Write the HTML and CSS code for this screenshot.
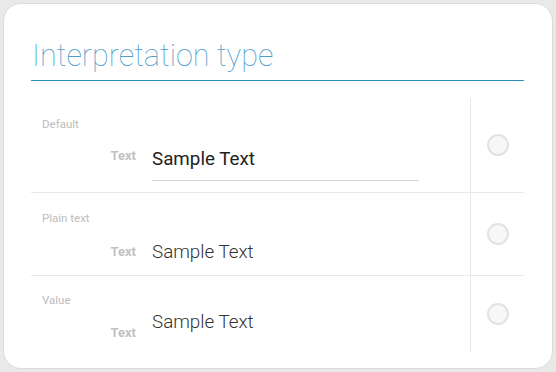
FILE: index.html
```html
<!DOCTYPE html>
<html lang="en">
<head>
    <meta charset="UTF-8">
    <meta name="viewport" content="width=device-width, initial-scale=1.0">
    <title>Interpretation type</title>
    <link rel="stylesheet" href="styles.css">
</head>
<body>
    <div class="card">
        <h1 class="title">Interpretation type</h1>
        <div class="options">
            <div class="option">
                <div class="option-body">
                    <div class="caption">Default</div>
                    <div class="field">
                        <span class="field-label">Text</span>
                        <div class="field-input">Sample Text</div>
                    </div>
                </div>
                <div class="option-radio"><span class="radio"></span></div>
            </div>
            <div class="option plain">
                <div class="option-body">
                    <div class="caption">Plain text</div>
                    <div class="field">
                        <span class="field-label">Text</span>
                        <div class="field-value">Sample Text</div>
                    </div>
                </div>
                <div class="option-radio"><span class="radio"></span></div>
            </div>
            <div class="option value">
                <div class="option-body">
                    <div class="caption">Value</div>
                    <div class="field">
                        <span class="field-label">Text</span>
                        <div class="field-value">Sample Text</div>
                    </div>
                </div>
                <div class="option-radio"><span class="radio"></span></div>
            </div>
        </div>
    </div>
</body>
</html>
```

FILE: styles.css
```css
body {
    font-family: Roboto, "Liberation Sans", sans-serif;
    margin: 0;
    padding: 3px;
    background-color: #e9e9e9;
}
.card {
    box-sizing: border-box;
    width: 550px;
    height: 366px;
    background-color: #fff;
    border: 1px solid #dcdcdc;
    border-radius: 18px;
    padding: 34px 28px 0 27px;
}
.title {
    margin: 0;
    font-size: 30.6px;
    font-weight: 100;
    line-height: 36px;
    color: #4f9ccb;
    padding-left: 1px;
    padding-bottom: 6px;
    border-bottom: 1px solid #2f8fb9;
}
.options {
    margin-top: 17px;
}
.option {
    display: flex;
    border-bottom: 1px solid #e8e8e8;
}
.option:last-child {
    border-bottom: none;
}
.option-body {
    flex: 1;
    padding: 20px 0 11px 11px;
    border-right: 1px solid #e6e6e6;
}
.option-radio {
    width: 53px;
    display: flex;
    align-items: center;
    justify-content: center;
}
.radio {
    box-sizing: border-box;
    width: 22px;
    height: 22px;
    border-radius: 50%;
    border: 2px solid #e2e2e4;
    background-color: #f7f7fa;
}
.caption {
    font-size: 11.5px;
    line-height: 12px;
    color: #bdbdbd;
}
.field {
    display: flex;
    margin-top: 15px;
}
.field-label {
    width: 94px;
    text-align: right;
    font-size: 13px;
    font-weight: 700;
    line-height: 22px;
    color: #c2c2c2;
    margin-right: 16px;
}
.field-input {
    box-sizing: border-box;
    width: 267px;
    height: 36px;
    font-size: 18.8px;
    line-height: 28px;
    color: #222;
    border-bottom: 1px solid #d6d6d6;
}
.field-value {
    font-size: 18.8px;
    font-weight: 300;
    line-height: 28px;
    color: #333;
}
.plain .option-body {
    padding: 19px 0 9px 11px;
}
.plain .field {
    margin-top: 14px;
}
.plain .field-label {
    line-height: 28px;
}
.value .option-body {
    padding: 18px 0 8px 11px;
}
.value .field {
    margin-top: 2px;
    height: 36px;
}
.value .field-label {
    margin-top: 14px;
}
```
